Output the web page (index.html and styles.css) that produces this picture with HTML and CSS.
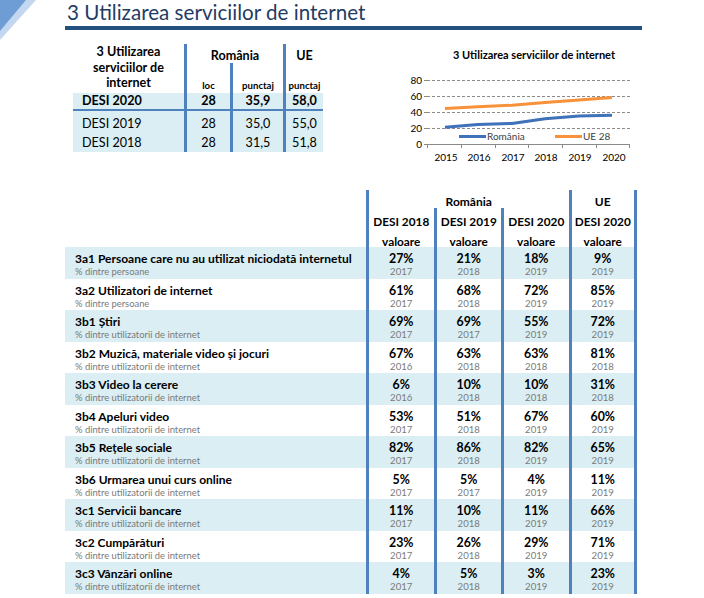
FILE: index.html
```html
<!DOCTYPE html>
<html lang="ro">
<head>
<meta charset="utf-8">
<title>3 Utilizarea serviciilor de internet</title>
<link rel="stylesheet" href="styles.css">
</head>
<body>
<svg class="corner" width="40" height="42" viewBox="0 0 40 42">
  <polygon points="0,0 36,0 0,40" fill="#c3d8f0"/>
  <polygon points="0,0 26,0 0,31" fill="#6d9dd4"/>
</svg>
<h1 class="title">3 Utilizarea serviciilor de internet</h1>
<div class="rule"></div>

<div class="top">
  <div class="stbl">
    <div class="st-label">3 Utilizarea<br>serviciilor de<br>internet</div>
    <div class="st-h st-ro">România</div>
    <div class="st-h st-ue">UE</div>
    <div class="st-sub">loc</div>
    <div class="st-sub">punctaj</div>
    <div class="st-sub">punctaj</div>

    <div class="st-c r20 lbl">DESI 2020</div>
    <div class="st-c r20 v">28</div>
    <div class="st-c r20 v">35,9</div>
    <div class="st-c r20 v">58,0</div>

    <div class="st-c r19 lbl">DESI 2019</div>
    <div class="st-c r19 v">28</div>
    <div class="st-c r19 v">35,0</div>
    <div class="st-c r19 v">55,0</div>

    <div class="st-c r18 lbl">DESI 2018</div>
    <div class="st-c r18 v">28</div>
    <div class="st-c r18 v">31,5</div>
    <div class="st-c r18 v">51,8</div>
  </div>

  <svg class="chart" width="270" height="128" viewBox="380 40 270 128">
    <text class="ch-title" x="529" y="59" text-anchor="middle" textLength="162" lengthAdjust="spacingAndGlyphs">3 Utilizarea serviciilor de internet</text>
    <g stroke="#8a8a8a" stroke-width="1" stroke-dasharray="3 2">
      <line x1="422" x2="625" y1="80.5" y2="80.5"/>
      <line x1="422" x2="625" y1="96.5" y2="96.5"/>
      <line x1="422" x2="625" y1="112.5" y2="112.5"/>
      <line x1="422" x2="625" y1="128.5" y2="128.5"/>
    </g>
    <g stroke="#8a8a8a" stroke-width="1">
      <line x1="419" x2="625" y1="144.5" y2="144.5"/>
      <line x1="419" x2="422" y1="80.5" y2="80.5"/>
      <line x1="419" x2="422" y1="96.5" y2="96.5"/>
      <line x1="419" x2="422" y1="112.5" y2="112.5"/>
      <line x1="419" x2="422" y1="128.5" y2="128.5"/>
      <line x1="422.5" x2="422.5" y1="144" y2="148"/>
      <line x1="456.5" x2="456.5" y1="144" y2="148"/>
      <line x1="490.5" x2="490.5" y1="144" y2="148"/>
      <line x1="523.5" x2="523.5" y1="144" y2="148"/>
      <line x1="557.5" x2="557.5" y1="144" y2="148"/>
      <line x1="591.5" x2="591.5" y1="144" y2="148"/>
      <line x1="624.5" x2="624.5" y1="144" y2="148"/>
    </g>
    <g class="ax" text-anchor="end">
      <text x="417" y="84">80</text>
      <text x="417" y="100">60</text>
      <text x="417" y="116">40</text>
      <text x="417" y="132">20</text>
      <text x="417" y="148">0</text>
    </g>
    <g class="ax" text-anchor="middle">
      <text x="441" y="161">2015</text>
      <text x="474" y="161">2016</text>
      <text x="508" y="161">2017</text>
      <text x="541" y="161">2018</text>
      <text x="575" y="161">2019</text>
      <text x="609" y="161">2020</text>
    </g>
    <polyline points="440,108.4 473,106.8 507,105.2 540,102.6 574,100 607,97.6" fill="none" stroke="#f7923a" stroke-width="3" stroke-linejoin="round"/>
    <polyline points="440,127.2 473,124.4 507,123.4 540,118.8 574,116 607,115.3" fill="none" stroke="#3f72b8" stroke-width="3" stroke-linejoin="round"/>
    <line x1="454" x2="481" y1="136.5" y2="136.5" stroke="#3f72b8" stroke-width="3"/>
    <text class="lg" x="482" y="140">România</text>
    <line x1="550" x2="577" y1="136.5" y2="136.5" stroke="#f7923a" stroke-width="3"/>
    <text class="lg" x="578" y="140">UE 28</text>
  </svg>
</div>

<div class="btbl">
  <div class="h-empty"></div>
  <div class="h-ro">România</div>
  <div class="h-ue">UE</div>

  <div class="h-empty2"></div>
  <div class="h2">DESI 2018<br>valoare</div>
  <div class="h2">DESI 2019<br>valoare</div>
  <div class="h2">DESI 2020<br>valoare</div>
  <div class="h2 last">DESI 2020<br>valoare</div>

  <div class="c lab odd"><div class="t">3a1 Persoane care nu au utilizat niciodată internetul</div><div class="s">% dintre persoane</div></div>
  <div class="c val odd"><div class="t">27%</div><div class="s">2017</div></div>
  <div class="c val odd"><div class="t">21%</div><div class="s">2018</div></div>
  <div class="c val odd"><div class="t">18%</div><div class="s">2019</div></div>
  <div class="c val odd last"><div class="t">9%</div><div class="s">2019</div></div>

  <div class="c lab"><div class="t">3a2 Utilizatori de internet</div><div class="s">% dintre persoane</div></div>
  <div class="c val"><div class="t">61%</div><div class="s">2017</div></div>
  <div class="c val"><div class="t">68%</div><div class="s">2018</div></div>
  <div class="c val"><div class="t">72%</div><div class="s">2019</div></div>
  <div class="c val last"><div class="t">85%</div><div class="s">2019</div></div>

  <div class="c lab odd"><div class="t">3b1 Știri</div><div class="s">% dintre utilizatorii de internet</div></div>
  <div class="c val odd"><div class="t">69%</div><div class="s">2017</div></div>
  <div class="c val odd"><div class="t">69%</div><div class="s">2017</div></div>
  <div class="c val odd"><div class="t">55%</div><div class="s">2019</div></div>
  <div class="c val odd last"><div class="t">72%</div><div class="s">2019</div></div>

  <div class="c lab"><div class="t">3b2 Muzică, materiale video și jocuri</div><div class="s">% dintre utilizatorii de internet</div></div>
  <div class="c val"><div class="t">67%</div><div class="s">2016</div></div>
  <div class="c val"><div class="t">63%</div><div class="s">2018</div></div>
  <div class="c val"><div class="t">63%</div><div class="s">2018</div></div>
  <div class="c val last"><div class="t">81%</div><div class="s">2018</div></div>

  <div class="c lab odd"><div class="t">3b3 Video la cerere</div><div class="s">% dintre utilizatorii de internet</div></div>
  <div class="c val odd"><div class="t">6%</div><div class="s">2016</div></div>
  <div class="c val odd"><div class="t">10%</div><div class="s">2018</div></div>
  <div class="c val odd"><div class="t">10%</div><div class="s">2018</div></div>
  <div class="c val odd last"><div class="t">31%</div><div class="s">2018</div></div>

  <div class="c lab"><div class="t">3b4 Apeluri video</div><div class="s">% dintre utilizatorii de internet</div></div>
  <div class="c val"><div class="t">53%</div><div class="s">2017</div></div>
  <div class="c val"><div class="t">51%</div><div class="s">2018</div></div>
  <div class="c val"><div class="t">67%</div><div class="s">2019</div></div>
  <div class="c val last"><div class="t">60%</div><div class="s">2019</div></div>

  <div class="c lab odd"><div class="t">3b5 Rețele sociale</div><div class="s">% dintre utilizatorii de internet</div></div>
  <div class="c val odd"><div class="t">82%</div><div class="s">2017</div></div>
  <div class="c val odd"><div class="t">86%</div><div class="s">2018</div></div>
  <div class="c val odd"><div class="t">82%</div><div class="s">2019</div></div>
  <div class="c val odd last"><div class="t">65%</div><div class="s">2019</div></div>

  <div class="c lab"><div class="t">3b6 Urmarea unui curs online</div><div class="s">% dintre utilizatorii de internet</div></div>
  <div class="c val"><div class="t">5%</div><div class="s">2017</div></div>
  <div class="c val"><div class="t">5%</div><div class="s">2017</div></div>
  <div class="c val"><div class="t">4%</div><div class="s">2019</div></div>
  <div class="c val last"><div class="t">11%</div><div class="s">2019</div></div>

  <div class="c lab odd"><div class="t">3c1 Servicii bancare</div><div class="s">% dintre utilizatorii de internet</div></div>
  <div class="c val odd"><div class="t">11%</div><div class="s">2017</div></div>
  <div class="c val odd"><div class="t">10%</div><div class="s">2018</div></div>
  <div class="c val odd"><div class="t">11%</div><div class="s">2019</div></div>
  <div class="c val odd last"><div class="t">66%</div><div class="s">2019</div></div>

  <div class="c lab"><div class="t">3c2 Cumpărături</div><div class="s">% dintre utilizatorii de internet</div></div>
  <div class="c val"><div class="t">23%</div><div class="s">2017</div></div>
  <div class="c val"><div class="t">26%</div><div class="s">2018</div></div>
  <div class="c val"><div class="t">29%</div><div class="s">2019</div></div>
  <div class="c val last"><div class="t">71%</div><div class="s">2019</div></div>

  <div class="c lab odd"><div class="t">3c3 Vânzări online</div><div class="s">% dintre utilizatorii de internet</div></div>
  <div class="c val odd"><div class="t">4%</div><div class="s">2017</div></div>
  <div class="c val odd"><div class="t">5%</div><div class="s">2018</div></div>
  <div class="c val odd"><div class="t">3%</div><div class="s">2019</div></div>
  <div class="c val odd last"><div class="t">23%</div><div class="s">2019</div></div>
</div>
</body>
</html>
```

FILE: styles.css
```css
* { box-sizing: border-box; }

body {
  margin: 0;
  font-family: Lato, "Open Sans", "DejaVu Sans", sans-serif;
  color: #000;
  background: #fff;
  position: relative;
}

.corner {
  position: absolute;
  left: 0;
  top: 0;
}

.title {
  margin: 0 0 0 67px;
  height: 26px;
  font-size: 20.6px;
  line-height: 25px;
  font-weight: 400;
  color: #1f3c64;
  white-space: nowrap;
}

.rule {
  margin-left: 65px;
  width: 577px;
  height: 4px;
  background: #23507d;
}

/* ---------- top section ---------- */
.top {
  display: flex;
  align-items: flex-start;
  height: 138px;
  margin-top: 10px;
}

.stbl {
  display: grid;
  grid-template-columns: 111px 46px 53px 40px;
  grid-template-rows: 19px 30px auto auto auto;
  margin-left: 73px;
  margin-top: 4px;
  font-size: 12.6px;
}

.st-label {
  grid-row: 1 / 3;
  grid-column: 1;
  text-align: center;
  font-weight: 700;
  line-height: 15.5px;
  padding-top: 0;
}

.st-h {
  font-weight: 700;
  text-align: center;
  padding-top: 3px;
  line-height: 17px;
  border-left: 3px solid #4f81bd;
}

.st-ro { grid-column: 2 / 4; }
.st-ue { grid-column: 4; }

.st-sub {
  font-size: 9.6px;
  font-weight: 700;
  text-align: center;
  padding-top: 16px;
  line-height: 14px;
  border-left: 3px solid #4f81bd;
}

.st-c {
  background: #daeef3;
  text-align: center;
}

.st-c.v { border-left: 3px solid #4f81bd; }
.st-c.lbl { text-align: left; padding-left: 9px; }

.r20 {
  line-height: 16px;
  border-bottom: 2px solid #4f81bd;
  height: 18px;
  font-weight: 700;
}

.r19 {
  padding-top: 4px;
  line-height: 18px;
}

.r18 {
  line-height: 19px;
}

.chart {
  display: block;
  margin-left: 62px;
  margin-top: 0;
}

.chart text {
  font-family: Lato, "Open Sans", sans-serif;
  fill: #000;
}

.chart .ch-title {
  font-size: 11px;
  font-weight: 700;
}

.chart .ax {
  font-size: 10px;
}

.chart .lg {
  font-size: 10px;
  fill: #404040;
}

/* ---------- big table ---------- */
.btbl {
  display: grid;
  grid-template-columns: 301px 67.5px 67.5px 67.5px 68.5px;
  grid-template-rows: 18px 39px repeat(11, 31.5px);
  margin-left: 65px;
  margin-top: 12px;
  font-size: 12px;
}

.h-empty { grid-column: 1; }
.h-empty2 { grid-column: 1; }

.h-ro, .h-ue {
  font-weight: 700;
  text-align: center;
  padding-top: 3px;
  line-height: 17px;
  border-left: 3px solid #4f81bd;
}

.h-ro { grid-column: 2 / 5; }
.h-ue { grid-column: 5; border-right: 3px solid #4f81bd; }

.h2 {
  font-size: 11.8px;
  font-weight: 700;
  text-align: center;
  padding-top: 4px;
  line-height: 20px;
  border-left: 3px solid #4f81bd;
  white-space: nowrap;
}

.h2.last,
.c.last { border-right: 3px solid #4f81bd; }

.c {
  padding-top: 4px;
}

.c.odd { background: #daeef3; }

.c .t {
  font-weight: 700;
  line-height: 15px;
  white-space: nowrap;
}

.c.val .t { font-size: 12.4px; }

.c .s {
  font-size: 9.4px;
  line-height: 11px;
  color: #7a7a7a;
  white-space: nowrap;
}

.c.lab { padding-left: 10px; }

.c.val {
  text-align: center;
  border-left: 3px solid #4f81bd;
}

.c.val .s { font-size: 9.6px; }
```
